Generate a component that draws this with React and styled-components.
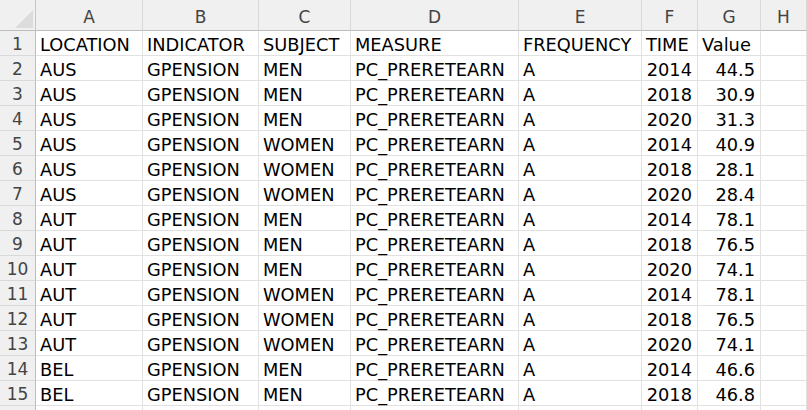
import React from 'react';
import styled, { createGlobalStyle } from 'styled-components';

const GlobalStyle = createGlobalStyle`
  html, body { margin: 0; padding: 0; background: #fff; overflow: hidden; }
`;

const columns = ['A', 'B', 'C', 'D', 'E', 'F', 'G', 'H'];
const widths = '36px 107px 116px 92px 168px 123px 56px 63px 1fr';

const header = ['LOCATION', 'INDICATOR', 'SUBJECT', 'MEASURE', 'FREQUENCY', 'TIME', 'Value'];

const rows = [
  ['AUS', 'MEN', 2014, '44.5'],
  ['AUS', 'MEN', 2018, '30.9'],
  ['AUS', 'MEN', 2020, '31.3'],
  ['AUS', 'WOMEN', 2014, '40.9'],
  ['AUS', 'WOMEN', 2018, '28.1'],
  ['AUS', 'WOMEN', 2020, '28.4'],
  ['AUT', 'MEN', 2014, '78.1'],
  ['AUT', 'MEN', 2018, '76.5'],
  ['AUT', 'MEN', 2020, '74.1'],
  ['AUT', 'WOMEN', 2014, '78.1'],
  ['AUT', 'WOMEN', 2018, '76.5'],
  ['AUT', 'WOMEN', 2020, '74.1'],
  ['BEL', 'MEN', 2014, '46.6'],
  ['BEL', 'MEN', 2018, '46.8'],
];

const Sheet = styled.div`
  display: grid;
  grid-template-columns: ${widths};
  width: 807px;
  height: 410px;
  overflow: hidden;
  font-family: "DejaVu Sans", "Noto Sans", sans-serif;
  font-size: 17.8px;
  color: #000;
  grid-auto-rows: 25px;
  grid-template-rows: 31px;
`;

const Corner = styled.div`
  background: #f0f0f0;
  border-right: 1px solid #c6c6c6;
  border-bottom: 1px solid #bdbdbd;
  position: relative;
  &::after {
    content: '';
    position: absolute;
    right: 2px;
    bottom: 2px;
    width: 0;
    height: 0;
    border-left: 18px solid transparent;
    border-bottom: 18px solid #dcdcdc;
  }
`;

const ColHead = styled.div`
  background: #f0f0f0;
  border-right: 1px solid #d9d9d9;
  border-bottom: 1px solid #bdbdbd;
  color: #444;
  font-size: 17px;
  display: flex;
  align-items: center;
  justify-content: center;
  padding-top: 3px;
`;

const RowHead = styled.div`
  background: #f0f0f0;
  border-right: 1px solid #bdbdbd;
  border-bottom: 1px solid #d9d9d9;
  color: #444;
  font-size: 17px;
  display: flex;
  align-items: center;
  justify-content: center;
  padding-top: 2px;
`;

const Cell = styled.div`
  border-right: 1px solid #e1e1e1;
  border-bottom: 1px solid #e1e1e1;
  display: flex;
  align-items: center;
  justify-content: ${(p) => (p.$num ? 'flex-end' : 'flex-start')};
  padding: 2px ${(p) => (p.$num ? '5px' : '0')} 0 ${(p) => (p.$num ? '0' : '4px')};
  white-space: nowrap;
  overflow: visible;
`;

const App = () => {
  const data = [header, ...rows.map(([loc, subj, time, val]) => [
    loc, 'GPENSION', subj, 'PC_PRERETEARN', 'A', time, val,
  ])];

  return (
    <>
      <GlobalStyle />
      <Sheet>
        <Corner />
        {columns.map((c) => (
          <ColHead key={c}>{c}</ColHead>
        ))}
        {[...data, null].map((row, r) => (
          <React.Fragment key={r}>
            <RowHead>{row ? r + 1 : ''}</RowHead>
            {columns.map((c, i) => {
              const v = row ? row[i] : undefined;
              const num = r > 0 && (i === 5 || i === 6);
              return (
                <Cell key={c} $num={num}>
                  {v}
                </Cell>
              );
            })}
          </React.Fragment>
        ))}
      </Sheet>
    </>
  );
};

export default App;
